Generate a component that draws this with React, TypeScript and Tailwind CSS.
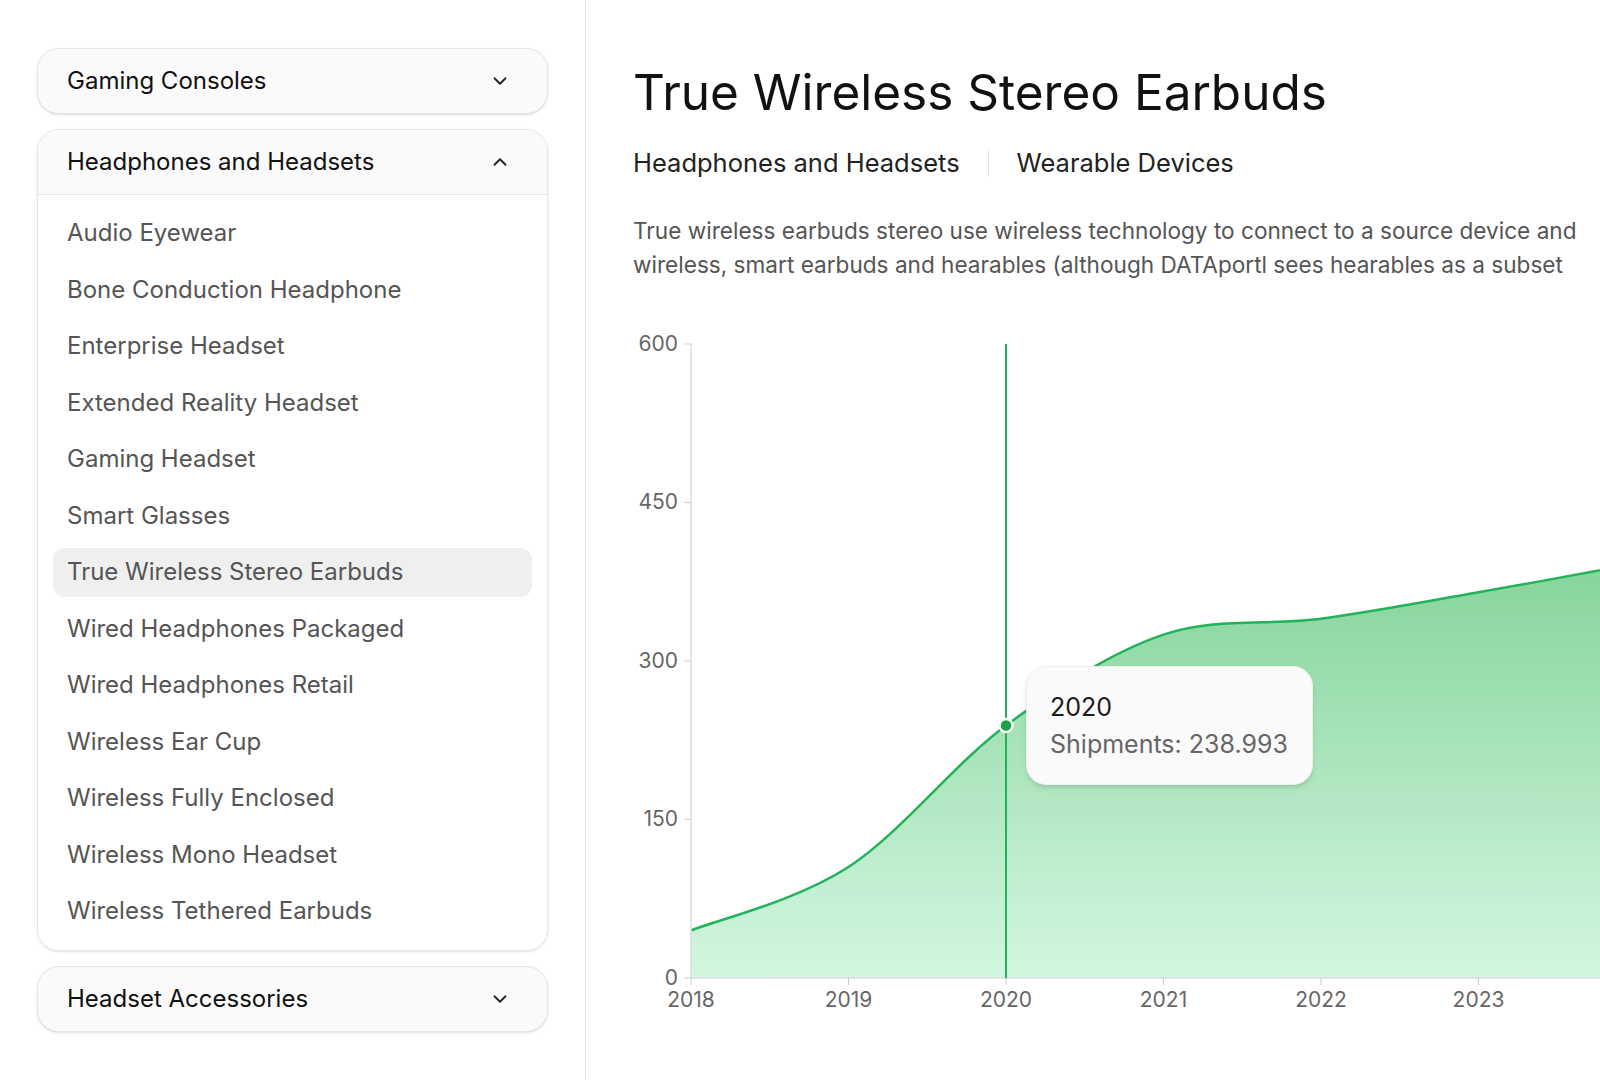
import React from "react";

const items = [
  "Audio Eyewear",
  "Bone Conduction Headphone",
  "Enterprise Headset",
  "Extended Reality Headset",
  "Gaming Headset",
  "Smart Glasses",
  "True Wireless Stereo Earbuds",
  "Wired Headphones Packaged",
  "Wired Headphones Retail",
  "Wireless Ear Cup",
  "Wireless Fully Enclosed",
  "Wireless Mono Headset",
  "Wireless Tethered Earbuds",
];

const data = [45, 105, 239, 325, 340, 365, 392];
const px = (i: number) => 691 + i * 157.5;
const py = (v: number) => 978 - v * 1.0567;

function smoothPath(pts: [number, number][]) {
  let d = `M${pts[0][0]},${pts[0][1]}`;
  for (let i = 0; i < pts.length - 1; i++) {
    const p0 = pts[i - 1] || pts[i];
    const p1 = pts[i];
    const p2 = pts[i + 1];
    const p3 = pts[i + 2] || p2;
    const c1x = p1[0] + (p2[0] - p0[0]) / 6;
    const c1y = p1[1] + (p2[1] - p0[1]) / 6;
    const c2x = p2[0] - (p3[0] - p1[0]) / 6;
    const c2y = p2[1] - (p3[1] - p1[1]) / 6;
    d += ` C${c1x},${c1y} ${c2x},${c2y} ${p2[0]},${p2[1]}`;
  }
  return d;
}

const Chevron = ({ up }: { up?: boolean }) => (
  <svg width="22" height="22" viewBox="0 0 24 24" fill="none" stroke="#222" strokeWidth="2" strokeLinecap="round" strokeLinejoin="round">
    <path d={up ? "M6 15l6-6 6 6" : "M6 9l6 6 6-6"} />
  </svg>
);

const Header = ({ label, up }: { label: string; up?: boolean }) => (
  <div className="flex items-center justify-between h-[64px] pl-[29px] pr-[36px] text-[24px] font-normal text-[#111]">
    {label}
    <Chevron up={up} />
  </div>
);

const Chart = () => {
  const pts = data.map((v, i) => [px(i), py(v)] as [number, number]);
  const line = smoothPath(pts);
  const area = `${line} L${px(6)},978 L691,978 Z`;
  const years = ["2018", "2019", "2020", "2021", "2022", "2023"];
  const ticks = [0, 150, 300, 450, 600];
  return (
    <svg width="980" height="700" viewBox="620 330 980 700" className="block">
      <defs>
        <linearGradient id="g" x1="0" y1="0" x2="0" y2="1">
          <stop offset="0%" stopColor="#86d49c" />
          <stop offset="100%" stopColor="#d3f7e0" />
        </linearGradient>
        <clipPath id="c">
          <rect x="691" y="300" width="1000" height="678" />
        </clipPath>
      </defs>
      <g clipPath="url(#c)">
        <path d={area} fill="url(#g)" />
        <path d={line} fill="none" stroke="#22b35a" strokeWidth="2.5" />
      </g>
      <line x1="691" y1="344" x2="691" y2="978" stroke="#ddd" strokeWidth="1.5" />
      <line x1="691" y1="978" x2="1600" y2="978" stroke="#ddd" strokeWidth="1.5" />
      {ticks.map((t) => (
        <g key={t}>
          <line x1="684" x2="691" y1={py(t)} y2={py(t)} stroke="#ccc" />
          <text x="678" y={py(t) + 7} textAnchor="end" fontSize="21" fill="#666" fontFamily="Inter, sans-serif">
            {t}
          </text>
        </g>
      ))}
      {years.map((y, i) => (
        <g key={y}>
          <line x1={px(i)} x2={px(i)} y1="978" y2="985" stroke="#ccc" />
          <text x={px(i)} y="1007" textAnchor="middle" fontSize="21" fill="#666" fontFamily="Inter, sans-serif">
            {y}
          </text>
        </g>
      ))}
      <line x1="1006" x2="1006" y1="344" y2="978" stroke="#22b35a" strokeWidth="2" />
      <circle cx="1006" cy={py(239)} r="6.5" fill="#16a34a" stroke="#fff" strokeWidth="2.5" />
    </svg>
  );
};

export default function App() {
  return (
    <div className="flex w-[1600px] h-[1080px] overflow-hidden bg-white" style={{ fontFamily: "Inter, 'Noto Sans', sans-serif" }}>
      <aside className="w-[586px] shrink-0 border-r border-[#e8e8e8] pt-[48px] px-[37px] flex flex-col gap-[15px]">
        <div className="rounded-[22px] border border-[#e6e6e6] bg-[#fafafa] shadow-sm">
          <Header label="Gaming Consoles" />
        </div>
        <div className="rounded-[22px] border border-[#e6e6e6] overflow-hidden shadow-sm">
          <div className="bg-[#fafafa] border-b border-[#e6e6e6]">
            <Header label="Headphones and Headsets" up />
          </div>
          <ul className="px-[15px] pt-[10px] pb-[10px] bg-white">
            {items.map((it) => (
              <li key={it} className="h-[56.5px] py-[4px]">
                <div
                  className={`h-full flex items-center px-[14px] rounded-[12px] text-[24px] text-[#555] ${
                    it === "True Wireless Stereo Earbuds" ? "bg-[#efefef]" : ""
                  }`}
                >
                  {it}
                </div>
              </li>
            ))}
          </ul>
        </div>
        <div className="rounded-[22px] border border-[#e6e6e6] bg-[#fafafa] shadow-sm">
          <Header label="Headset Accessories" />
        </div>
      </aside>
      <main className="relative flex-1 pl-[47px] pt-[58px]">
        <h1 className="text-[49.5px] leading-[68px] text-[#111] whitespace-nowrap">True Wireless Stereo Earbuds</h1>
        <div className="flex items-center mt-[18px] text-[25.5px] text-[#222] whitespace-nowrap">
          <span>Headphones and Headsets</span>
          <span className="w-px h-[28px] bg-[#e3e3e3] mx-[28px]" />
          <span>Wearable Devices</span>
        </div>
        <p className="mt-[32px] text-[22.6px] leading-[34px] text-[#555] whitespace-nowrap">
          True wireless earbuds stereo use wireless technology to connect to a source device and
          <br />
          wireless, smart earbuds and hearables (although DATAportl sees hearables as a subset
        </p>
        <div className="-ml-[13px] mt-[48px]">
          <Chart />
        </div>
        <div className="absolute left-[440px] top-[666px] w-[287px] h-[119px] rounded-[20px] bg-[#fafafa] border border-[#eee] shadow-md px-[23px] pt-[22px]">
          <div className="text-[25px] text-[#1a1a1a] leading-[36px]">2020</div>
          <div className="text-[25px] text-[#666] leading-[38px]">Shipments: 238.993</div>
        </div>
      </main>
    </div>
  );
}
